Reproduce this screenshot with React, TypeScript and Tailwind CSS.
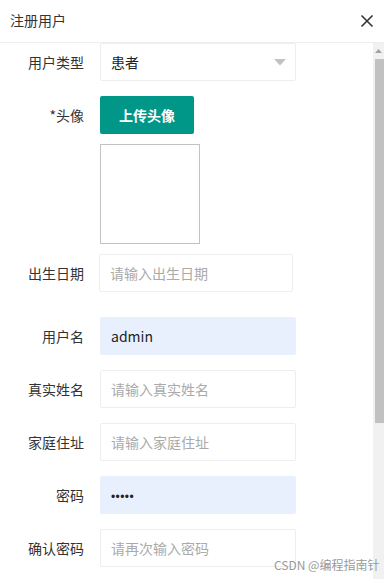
import React from "react";

const font = { fontFamily: '"Noto Sans CJK SC", "Noto Sans", sans-serif' };

function Label({ children }: { children: React.ReactNode }) {
  return (
    <div className="w-[84px] shrink-0 text-right text-[14px] text-[#333]">{children}</div>
  );
}

function Input({
  placeholder,
  value,
  filled,
  className = "",
}: {
  placeholder?: string;
  value?: React.ReactNode;
  filled?: boolean;
  className?: string;
}) {
  return (
    <div
      className={`h-[38px] flex items-center pl-[10px] text-[14px] rounded-[2px] border ${
        filled ? "bg-[#e8f0fe] border-[#e8f0fe]" : "bg-white border-[#eeeeee]"
      } ${className}`}
    >
      {value !== undefined ? (
        <span className="text-[#222]">{value}</span>
      ) : (
        <span className="text-[#aaaaaa]">{placeholder}</span>
      )}
    </div>
  );
}

export default function App() {
  return (
    <div className="w-[384px] h-[579px] bg-white overflow-hidden relative flex flex-col" style={font}>
      <div className="h-[43px] shrink-0 border-b border-[#eeeeee] flex items-center justify-between pl-[10px] pr-[10px] pb-[1px]">
        <span className="text-[14px] text-[#333]">注册用户</span>
        <svg width="14" height="14" viewBox="0 0 14 14">
          <path d="M1.5 1.5 L12.5 12.5 M12.5 1.5 L1.5 12.5" stroke="#333" strokeWidth="1.6" />
        </svg>
      </div>
      <div className="flex flex-1 min-h-0">
        <div className="flex-1 flex flex-col">
          <div className="flex items-center gap-[16px]">
            <Label>用户类型</Label>
            <div className="w-[196px] h-[38px] border border-[#eeeeee] rounded-[2px] flex items-center justify-between pl-[10px] pr-[9px] text-[14px] text-[#222]">
              <span>患者</span>
              <svg width="12" height="7" viewBox="0 0 12 7">
                <path d="M0 0 L12 0 L6 6.5 Z" fill="#c2c2c2" />
              </svg>
            </div>
          </div>
          <div className="flex items-center gap-[16px] mt-[15px]">
            <Label>*头像</Label>
            <div className="w-[94px] h-[38px] bg-[#009688] rounded-[2px] flex items-center justify-center text-white text-[14px] font-semibold">
              上传头像
            </div>
          </div>
          <div className="ml-[100px] mt-[10px] w-[100px] h-[100px] border border-[#c2c2c2]" />
          <div className="flex items-center gap-[15px] mt-[10px]">
            <Label>出生日期</Label>
            <Input className="w-[194px]" placeholder="请输入出生日期" />
          </div>
          <div className="flex items-center gap-[16px] mt-[25px]">
            <Label>用户名</Label>
            <Input className="w-[196px]" filled value="admin" />
          </div>
          <div className="flex items-center gap-[16px] mt-[15px]">
            <Label>真实姓名</Label>
            <Input className="w-[196px]" placeholder="请输入真实姓名" />
          </div>
          <div className="flex items-center gap-[16px] mt-[15px]">
            <Label>家庭住址</Label>
            <Input className="w-[196px]" placeholder="请输入家庭住址" />
          </div>
          <div className="flex items-center gap-[16px] mt-[15px]">
            <Label>密码</Label>
            <Input
              className="w-[196px]"
              filled
              value={
                <span
                  className="text-[12px] tracking-[0.4px] text-[#222]"
                  style={{ fontFamily: '"Liberation Sans", sans-serif' }}
                >
                  •••••
                </span>
              }
            />
          </div>
          <div className="flex items-center gap-[16px] mt-[15px]">
            <Label>确认密码</Label>
            <Input className="w-[196px]" placeholder="请再次输入密码" />
          </div>
        </div>
        <div className="w-[11px] shrink-0 bg-[#f1f1f1] flex flex-col items-end">
          <div className="w-full h-[16px] flex items-center justify-center">
            <svg width="7" height="4" viewBox="0 0 7 4">
              <path d="M0 4 L3.5 0 L7 4 Z" fill="#a3a3a3" />
            </svg>
          </div>
          <div className="w-[9px] h-[364px] bg-[#c1c1c1]" />
        </div>
      </div>
      <div className="absolute left-[274px] top-[557px] text-[12px] text-[#999] leading-[16px]">
        CSDN @编程指南针
      </div>
    </div>
  );
}
